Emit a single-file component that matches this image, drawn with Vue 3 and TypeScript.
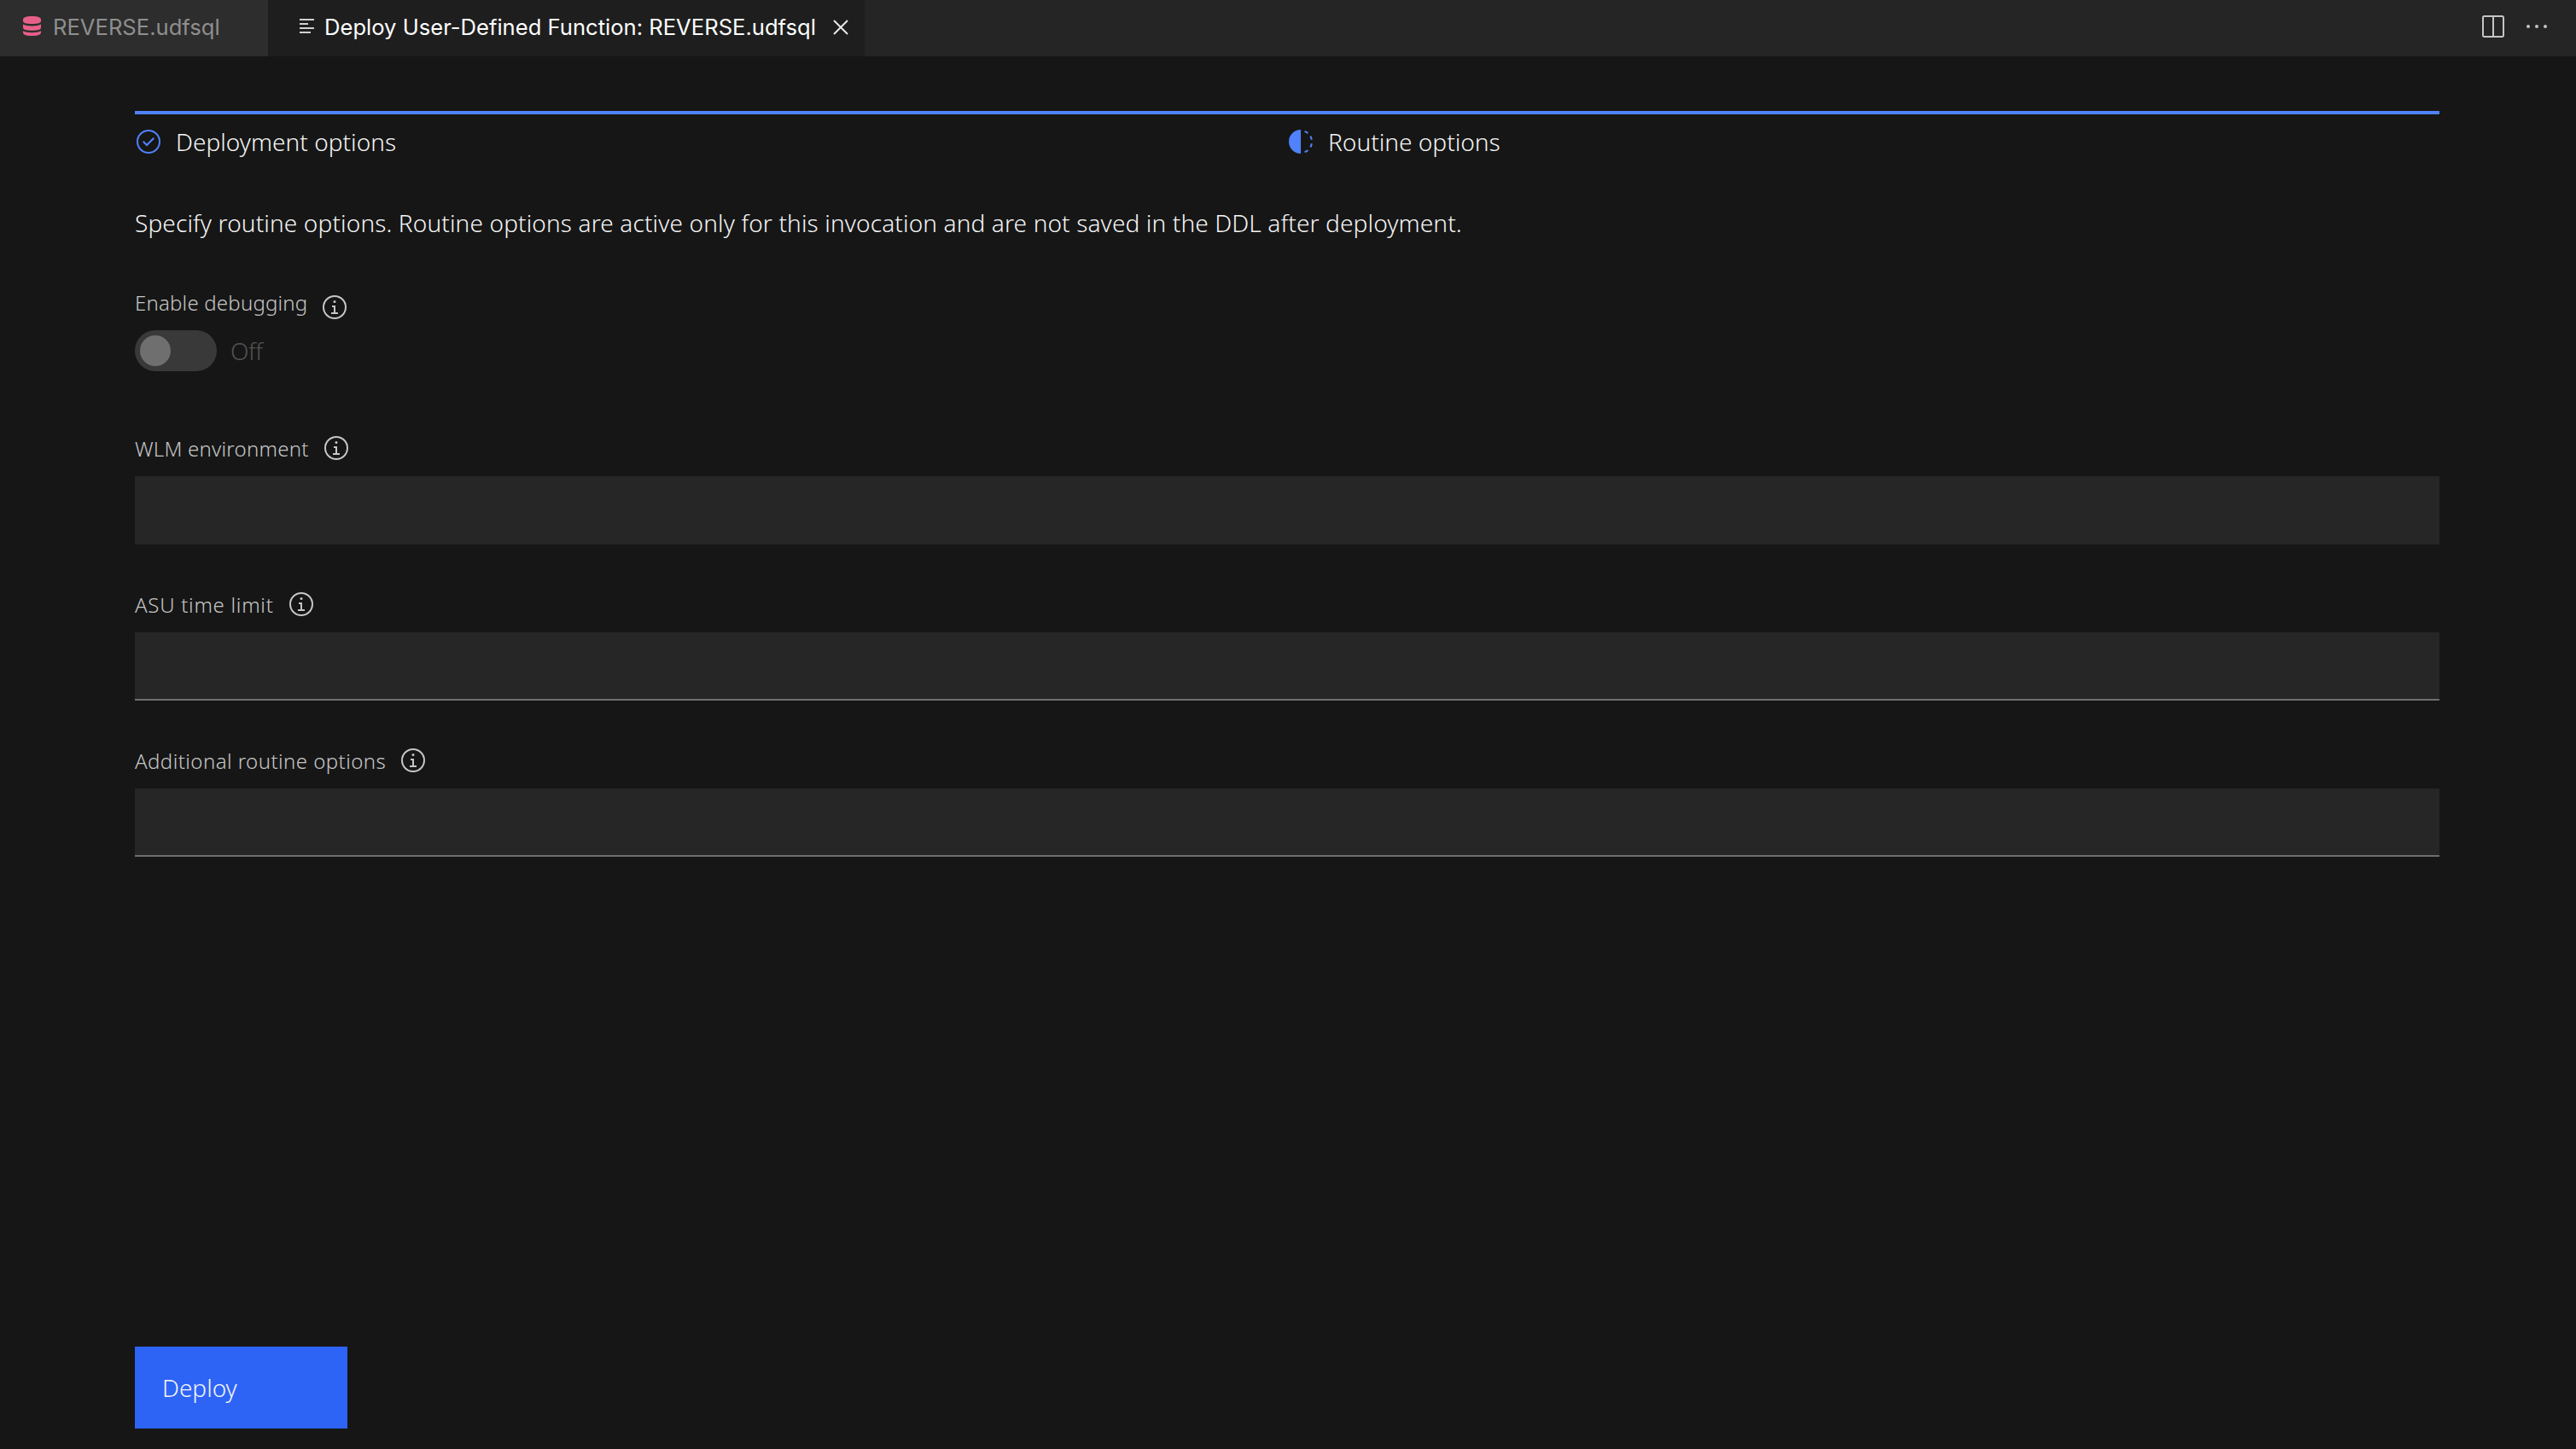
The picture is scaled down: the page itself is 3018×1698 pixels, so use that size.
<script setup lang="ts">
type Field = { label: string; underline: boolean; tracking: number };

const fields: Field[] = [
  { label: "WLM environment", underline: false, tracking: 0.23 },
  { label: "ASU time limit", underline: true, tracking: 0.73 },
  { label: "Additional routine options", underline: true, tracking: 0.44 },
];
</script>

<template>
  <div class="page">
    <header class="tabbar">
      <div class="tab tab-idle">
        <svg class="db-icon" viewBox="0 0 22 24" width="21" height="23" aria-hidden="true">
          <path d="M0 4C0 1.5 4 0 11 0s11 1.500 11 4v2c0 2-4 3.500-11 3.500S0 8 0 6z" />
          <path d="M0 10c2 1.400 6 2 11 2s9-.6 11-2v4c0 2-4 3.500-11 3.500S0 16 0 14z" />
          <path d="M0 18c2 1.400 6 2 11 2s9-.6 11-2v2c0 2.500-4 4-11 4S0 22.500 0 20z" />
        </svg>
        <span>REVERSE.udfsql</span>
      </div>
      <div class="tab tab-active">
        <svg class="lines-icon" viewBox="0 0 17 17" width="17" height="17" aria-hidden="true">
          <path d="M0 0h17v2H0zM0 5h10v2H0zM0 10h17v2H0zM0 15h13v2H0z" />
        </svg>
        <span>Deploy User-Defined Function: REVERSE.udfsql</span>
        <svg class="close-icon" viewBox="0 0 18 18" width="18" height="18" aria-hidden="true">
          <path d="M1 1l16 16M17 1L1 17" />
        </svg>
      </div>
      <div class="actions">
        <svg class="split-icon" viewBox="0 0 26 26" width="26" height="26" aria-hidden="true">
          <path d="M1 2.500a1.500 1.500 0 0 1 1.500-1.500h21a1.500 1.500 0 0 1 1.500 1.500v21a1.500 1.500 0 0 1-1.500 1.500h-21a1.500 1.500 0 0 1-1.500-1.500zM13 1v24" />
        </svg>
        <div class="dots"><i /><i /><i /></div>
      </div>
    </header>

    <main class="content">
      <ol class="steps">
        <li class="step">
          <svg class="step-icon" viewBox="0 0 32 32" aria-hidden="true">
            <polygon points="14 21.414 9 16.413 10.413 15 14 18.586 21.585 11 23 12.415 14 21.414" />
            <path d="M16,2A14,14,0,1,0,30,16,14,14,0,0,0,16,2Zm0,26A12,12,0,1,1,28,16,12,12,0,0,1,16,28Z" />
          </svg>
          <span>Deployment options</span>
        </li>
        <li class="step">
          <svg class="step-icon" viewBox="0 0 32 32" aria-hidden="true">
            <path d="M23.7642 6.8593l1.2851-1.5315A13.976 13.976 0 0 0 20.8672 2.887l-.6836 1.8776A11.9729 11.9729 0 0 1 23.7642 6.8593zM27.81 14l1.9677-.4128A13.8888 13.8888 0 0 0 28.14 9.0457L26.4087 10A12.52 12.52 0 0 1 27.81 14zM20.1836 27.2354l.6836 1.8776a13.976 13.976 0 0 0 4.1821-2.4408l-1.2851-1.5315A11.9729 11.9729 0 0 1 20.1836 27.2354zM26.4087 22L28.14 23a14.14 14.14 0 0 0 1.6382-4.5872L27.81 18.0659A12.1519 12.1519 0 0 1 26.4087 22zM16 30V2a14 14 0 0 0 0 28z" />
          </svg>
          <span>Routine options</span>
        </li>
      </ol>

      <p class="intro">
        Specify routine options. Routine options are active only for this invocation and are not saved in the DDL after deployment.
      </p>

      <section class="debug">
        <div class="label-row">
          <label>Enable debugging</label>
          <svg class="info info-low" viewBox="0 0 32 32" aria-hidden="true">
            <polygon points="17 22 17 14 13 14 13 16 15 16 15 22 12 22 12 24 20 24 20 22 17 22" />
            <path d="M16,8a1.5,1.5,0,1,0,1.5,1.5A1.5,1.5,0,0,0,16,8Z" />
            <path d="M16,30A14,14,0,1,1,30,16,14,14,0,0,1,16,30ZM16,4A12,12,0,1,0,28,16,12,12,0,0,0,16,4Z" />
          </svg>
        </div>
        <div class="toggle-row">
          <div class="toggle"><div class="knob" /></div>
          <span class="toggle-text">Off</span>
        </div>
      </section>

      <section v-for="f in fields" :key="f.label" class="field">
        <div class="label-row">
          <label :style="{ letterSpacing: `${f.tracking}px` }">{{ f.label }}</label>
          <svg class="info" viewBox="0 0 32 32" aria-hidden="true">
            <polygon points="17 22 17 14 13 14 13 16 15 16 15 22 12 22 12 24 20 24 20 22 17 22" />
            <path d="M16,8a1.5,1.5,0,1,0,1.5,1.5A1.5,1.5,0,0,0,16,8Z" />
            <path d="M16,30A14,14,0,1,1,30,16,14,14,0,0,1,16,30ZM16,4A12,12,0,1,0,28,16,12,12,0,0,0,16,4Z" />
          </svg>
        </div>
        <div class="input" :class="{ underline: f.underline }" />
      </section>

      <button class="deploy" type="button">Deploy</button>
    </main>
  </div>
</template>

<style>
html,
body {
  margin: 0;
  background: #161616;
}
</style>

<style scoped>
.page {
  width: 3018px;
  height: 1698px;
  display: flex;
  flex-direction: column;
  background: #161616;
  font-family: "Noto Sans", "Open Sans", sans-serif;
  overflow: hidden;
}

.tabbar {
  flex: 0 0 66px;
  display: flex;
  background: #252526;
  font-family: Inter, "Liberation Sans", sans-serif;
  font-size: 25.6px;
}

.tab {
  display: flex;
  align-items: center;
  height: 66px;
  padding-bottom: 3px;
  box-sizing: border-box;
}

.tab-idle {
  width: 314px;
  padding-left: 27px;
  gap: 14px;
  background: #2d2d2d;
  color: #8f8f8f;
}

.db-icon {
  fill: #e8608a;
  margin-bottom: 2px;
}

.tab-active {
  width: 699px;
  padding-left: 37px;
  background: #1e1e1e;
  color: #ffffff;
}

.lines-icon {
  fill: #d0d0d0;
  margin: 0 12px 2px 0;
}

.close-icon {
  fill: none;
  stroke: #e8e8e8;
  stroke-width: 2;
  margin-left: 20px;
}

.actions {
  margin-left: auto;
  display: flex;
  align-items: center;
  gap: 26px;
  padding-right: 34px;
  padding-bottom: 4px;
}

.split-icon {
  fill: none;
  stroke: #c5c5c5;
  stroke-width: 2;
}

.dots {
  display: flex;
  gap: 6px;
}

.dots i {
  width: 4px;
  height: 4px;
  border-radius: 50%;
  background: #c5c5c5;
}

.content {
  flex: 1;
  display: flex;
  flex-direction: column;
  padding: 64px 160px 24px 158px;
  min-height: 0;
}

.steps {
  display: flex;
  margin: 0;
  padding: 0;
  list-style: none;
}

.step {
  flex: 1;
  display: flex;
  align-items: center;
  gap: 16px;
  padding-top: 16px;
  border-top: 4px solid #4f82fb;
  color: #f4f4f4;
  font-size: 28px;
  font-weight: 300;
  line-height: 32px;
  letter-spacing: 0.04px;
}

.step-icon {
  width: 32px;
  height: 32px;
  fill: #4f82fb;
}

.intro {
  margin: 59px 0 0;
  color: #f4f4f4;
  font-size: 28px;
  font-weight: 300;
  line-height: 40px;
  letter-spacing: 0.14px;
}

.label-row {
  display: flex;
  align-items: center;
  gap: 16px;
  height: 32px;
  color: #c6c6c6;
  font-size: 24px;
  font-weight: 300;
  letter-spacing: 0.2px;
}

.debug {
  margin-top: 57px;
}

.toggle-row {
  display: flex;
  align-items: center;
  gap: 16px;
  margin-top: 17px;
}

.toggle {
  width: 96px;
  height: 48px;
  padding: 6px;
  box-sizing: border-box;
  border-radius: 24px;
  background: #393939;
}

.knob {
  width: 36px;
  height: 36px;
  border-radius: 50%;
  background: #6f6f6f;
}

.toggle-text {
  color: #525252;
  font-size: 28px;
  font-weight: 300;
  letter-spacing: -0.4px;
}

.info {
  width: 32px;
  height: 32px;
  fill: #c6c6c6;
}

.info-low {
  margin-top: 11px;
}

.field {
  margin-top: 54px;
}

.debug + .field {
  margin-top: 74px;
}

.field .label-row {
  margin-bottom: 17px;
}

.input {
  height: 80px;
  box-sizing: border-box;
  background: #262626;
}

.input.underline {
  border-bottom: 2px solid #6f6f6f;
}

.deploy {
  margin-top: auto;
  width: 249px;
  height: 96px;
  padding: 0 0 0 32px;
  border: 0;
  border-radius: 0;
  text-align: left;
  background: #2d64f6;
  color: #f4f4f4;
  font-family: inherit;
  font-size: 28px;
  font-weight: 300;
  letter-spacing: 0;
}
</style>
